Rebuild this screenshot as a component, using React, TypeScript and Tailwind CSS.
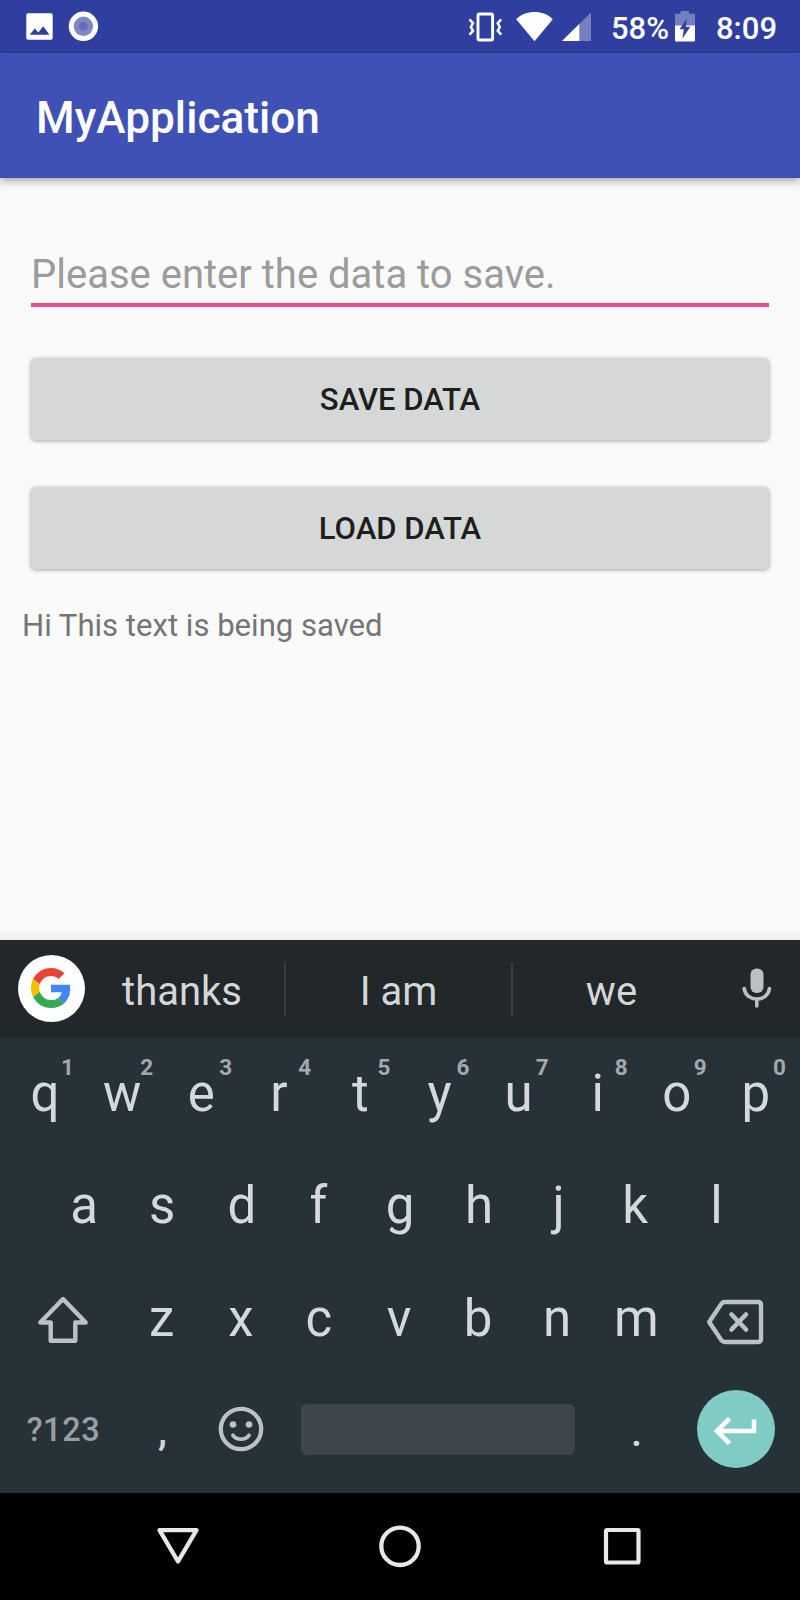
import React from "react";

const GREY = "#bcc1c4";

function StatusBar() {
  return (
    <div className="flex h-[53px] items-start bg-[#303f9f] text-white">
      <svg className="mt-[13px] ml-[26px] h-[27px] w-[27px]" viewBox="0 0 27 27">
        <path
          fillRule="evenodd"
          fill="#fff"
          d="M2.500 .3h22a2 2 0 0 1 2.200 2.200v22a2 2 0 0 1-2.200 2.200h-22a2 2 0 0 1-2.200-2.200v-22a2 2 0 0 1 2.200-2.200zM3.700 21.700h19.800L17.200 13.300l-4.900 6.300-3.500-4.200z"
        />
      </svg>
      <svg className="mt-[11px] ml-[15px] h-[31px] w-[31px]" viewBox="0 0 31 31">
        <circle cx="15.4" cy="15.3" r="14.7" fill="#fff" />
        <circle cx="15.4" cy="15.3" r="9.7" fill="#8087c4" />
        <circle cx="15.4" cy="15.3" r="4.5" fill="#636cb6" />
      </svg>
      <div className="flex-1" />
      <svg className="mt-[12px] h-[30px] w-[36px]" viewBox="0 0 36 30" fill="none" stroke="#fff">
        <rect x="10" y="2" width="14.600" height="26" rx="1.500" strokeWidth="2.900" />
        <path d="M1.500 7.300L5 11.200 2.900 15 5 18.800 1.500 22.700M33.200 7.300L29.700 11.200 31.800 15 29.700 18.800 33.200 22.700" strokeWidth="2.500" />
      </svg>
      <svg className="mt-[11px] ml-[12px] h-[31px] w-[37px]" viewBox="0 0 37 31">
        <path d="M18.500 30.300L.2 8.300C5 3.300 11.500 1 18.500 1s13.500 2.300 18.300 7.300z" fill="#fff" />
      </svg>
      <svg className="mt-[11px] ml-[9px] h-[30px] w-[30px]" viewBox="0 0 30 30">
        <path d="M29 1.500V30H0z" fill="#767fc0" />
        <path d="M17.300 13V30H0z" fill="#fff" />
      </svg>
      <span className="mt-[9px] ml-[19px] w-[64px] text-[31px] leading-[40px] font-medium">58%</span>
      <svg className="mt-[11px] h-[31px] w-[20px]" viewBox="0 0 20 31">
        <path d="M1 2.700H5.500V0h8.500V2.700h5A1 1 0 0 1 20 3.700V15H0V3.700A1 1 0 0 1 1 2.700z" fill="#767fc0" />
        <path d="M0 14.500h20V29.500a1 1 0 0 1-1 1h-18A1 1 0 0 1 0 29.500z" fill="#fff" />
        <path d="M12 7.500L4.500 18.300h4.300L7.500 27.500 15.300 15.700h-4.500z" fill="#303f9f" />
      </svg>
      <span className="mt-[9px] mr-[22px] ml-[21px] w-[62px] text-[31px] leading-[40px] font-medium">8:09</span>
    </div>
  );
}

function Button({ label }: { label: string }) {
  return (
    <button className="flex h-[82px] w-full items-center justify-center rounded-[5px] bg-[#d6d8d7] pt-[2px] text-[31.100px] font-medium text-[#1d1f1e] shadow-[0_1px_4px_rgba(0,0,0,0.36)]">
      {label}
    </button>
  );
}

function Key({ label, hint, nudge = "" }: { label: string; hint?: string; nudge?: string }) {
  return (
    <div className={`relative flex w-[79.100px] items-center justify-center text-[51px] leading-[50px] ${nudge}`}>
      {label}
      {hint && (
        <span className="absolute top-[17px] left-[56px] w-[14px] text-center text-[22.500px] leading-[24px] font-bold text-[#a3a9ac]">
          {hint}
        </span>
      )}
    </div>
  );
}

function GoogleLogo() {
  return (
    <div className="ml-[18px] flex h-[67px] w-[67px] items-center justify-center rounded-full bg-white pr-px">
      <svg className="h-[40px] w-[40px]" viewBox="0 0 48 48">
        <path fill="#ea4335" d="M24 9.500c3.540 0 6.710 1.220 9.210 3.600l6.850-6.850C35.900 2.380 30.470 0 24 0 14.620 0 6.510 5.380 2.560 13.220l7.980 6.190C12.430 13.720 17.740 9.500 24 9.500z" />
        <path fill="#4285f4" d="M46.980 24.550c0-1.570-.15-3.090-.38-4.550H24v9.020h12.940c-.58 2.960-2.260 5.480-4.780 7.180l7.730 6c4.510-4.180 7.090-10.360 7.090-17.650z" />
        <path fill="#fbbc05" d="M10.530 28.590c-.48-1.450-.76-2.990-.76-4.590s.27-3.140.76-4.590l-7.980-6.190C.92 16.460 0 20.120 0 24c0 3.880.92 7.540 2.560 10.780l7.970-6.190z" />
        <path fill="#34a853" d="M24 48c6.480 0 11.930-2.130 15.890-5.810l-7.730-6c-2.150 1.450-4.920 2.300-8.160 2.300-6.260 0-11.570-4.220-13.470-9.910l-7.980 6.190C6.510 42.620 14.620 48 24 48z" />
      </svg>
    </div>
  );
}

function Suggestions() {
  return (
    <div className="flex h-[98px] items-center bg-[#22272a] pb-[2px] text-[40px] text-[#d3d7da]">
      <GoogleLogo />
      <div className="w-[194px] pt-[7px] text-center">thanks</div>
      <div className="mt-px ml-[5px] h-[54px] w-[2px] bg-[#373c3f]" />
      <div className="w-[225px] pt-[7px] text-center">I am</div>
      <div className="mt-px h-[54px] w-[2px] bg-[#373c3f]" />
      <div className="w-[197px] pt-[7px] text-center">we</div>
      <svg className="ml-[32px] h-[40px] w-[30px]" viewBox="0 0 30 40">
        <rect x="8.500" y="0.500" width="13" height="24.500" rx="6" fill="#bdbfc1" />
        <path d="M2.200 20.500c.8 7 6.600 10.500 12.600 10.500s11.800-3.500 12.600-10.500M14.800 31v7" fill="none" stroke="#bdbfc1" strokeWidth="3.600" strokeLinecap="round" />
      </svg>
    </div>
  );
}

function Keyboard() {
  return (
    <div className="h-[455px] bg-[#273238] text-[#d5d9dc]">
      <div className="flex h-[112px] justify-center">
        {"qwertyuiop".split("").map((k, i) => (
          <Key
            key={k}
            label={k}
            hint={String((i + 1) % 10)}
            nudge={k === "r" ? "pr-[5px]" : k === "q" ? "pl-[2px]" : k === "w" || k === "e" ? "pr-[2px]" : ""}
          />
        ))}
      </div>
      <div className="flex h-[112px] justify-center">
        {"asdfghjkl".split("").map((k) => (
          <Key key={k} label={k} nudge={k === "f" ? "pr-[5px]" : k === "k" ? "pr-[4px]" : k === "s" ? "pr-px" : k === "a" || k === "j" ? "pl-px" : ""} />
        ))}
      </div>
      <div className="flex h-[112px] justify-center">
        <div className="flex w-[119px] items-center justify-center pt-[3px] pr-px">
          <svg className="h-[50px] w-[52px]" viewBox="0 0 52 50" fill="none" stroke={GREY} strokeWidth="4.400">
            <path d="M26 4L3.300 27.500H13.700V45.800H38.300V27.500H48.700z" strokeLinejoin="round" />
          </svg>
        </div>
        {"zxcvbnm".split("").map((k) => (
          <Key key={k} label={k} nudge={k === "c" ? "pt-[2px] pr-[4px]" : "pt-[2px] pr-[2px]"} />
        ))}
        <div className="flex w-[119px] items-center justify-center pt-[7px] pr-[2px]">
          <svg className="h-[46px] w-[58px]" viewBox="0 0 58 46" fill="none" stroke={GREY} strokeWidth="4.400" strokeLinejoin="round" strokeLinecap="round">
            <path d="M3.200 23L15.500 4.600Q16.800 3 19 3H52Q55 3 55 6V40Q55 43 52 43H19Q16.800 43 15.500 41.400z" />
            <path d="M25.500 15.500l14.500 15M40 15.500l-14.500 15" strokeWidth="4.600" />
          </svg>
        </div>
      </div>
      <div className="flex h-[110px] items-center px-[4px]">
        <div className="w-[119px] pt-[2px] text-center text-[32.500px] font-medium tracking-[0.600px] text-[#98a0a4]">?123</div>
        <div className="w-[79px] pt-[5px] text-center text-[40px] font-medium">,</div>
        <div className="flex w-[79px] justify-center pr-[2px]">
          <svg className="h-[46px] w-[46px]" viewBox="0 0 46 46">
            <circle cx="23" cy="23" r="20.200" fill="none" stroke={GREY} strokeWidth="4.300" />
            <circle cx="15" cy="18.500" r="3.300" fill={GREY} />
            <circle cx="31" cy="18.500" r="3.300" fill={GREY} />
            <path d="M15 29.300c4 5.200 12 5.200 16 0" fill="none" stroke={GREY} strokeWidth="3.800" strokeLinecap="round" />
          </svg>
        </div>
        <div className="ml-[20px] h-[51px] w-[274px] rounded-[6px] bg-[#3c464b]" />
        <div className="ml-[22px] w-[79px] pt-[7px] text-center text-[40px] font-medium">.</div>
        <div className="flex flex-1 justify-center pr-px">
          <div className="flex h-[78px] w-[78px] items-center justify-center rounded-full bg-[#80cbc4]">
            <svg className="mt-[4px] mr-[2px] h-[28px] w-[44px]" viewBox="0 0 44 28" fill="none" stroke="#fff" strokeWidth="4.600">
              <path d="M41 2.500V14H4M16.500 1.500L4 14l12.500 12.500" />
            </svg>
          </div>
        </div>
      </div>
    </div>
  );
}

function NavBar() {
  return (
    <div className="flex h-[107px] items-center justify-center gap-[178px] bg-black pb-px">
      <svg className="h-[44px] w-[44px]" viewBox="0 0 44 44">
        <path d="M3.500 6.200h37L22 37.500z" fill="none" stroke="#e8e8e8" strokeWidth="4.300" strokeLinejoin="round" />
      </svg>
      <svg className="h-[44px] w-[44px]" viewBox="0 0 44 44">
        <circle cx="22" cy="22.300" r="18.700" fill="none" stroke="#e8e8e8" strokeWidth="4.300" />
      </svg>
      <svg className="h-[44px] w-[44px]" viewBox="0 0 44 44">
        <rect x="6" y="6" width="32.500" height="32.500" rx="1" fill="none" stroke="#e8e8e8" strokeWidth="4.200" />
      </svg>
    </div>
  );
}

export default function App() {
  return (
    <div className="flex h-[1600px] w-[800px] flex-col overflow-hidden bg-[#fafafa] font-['Roboto','Liberation_Sans',sans-serif]">
      <StatusBar />
      <header className="flex h-[125px] items-center bg-[#3f51b5] pt-[6px] pl-[36px] text-[44.200px] font-medium text-white shadow-[0_3px_8px_rgba(0,0,0,0.34)]">
        MyApplication
      </header>
      <main className="flex flex-1 flex-col px-[31px] pt-[69px]">
        <div className="h-[60px] border-b-[4px] border-[#f04b86] text-[40px] leading-[55px] text-[#9b9b9b]">
          Please enter the data to save.
        </div>
        <div className="mt-[51px] flex flex-col gap-[47px]">
          <Button label="SAVE DATA" />
          <Button label="LOAD DATA" />
        </div>
        <p className="mt-[37px] ml-[-9px] text-[31.100px] leading-[40px] text-[#757575]">Hi This text is being saved</p>
      </main>
      <div className="h-[12px] bg-linear-to-b from-[#fafafa] to-[#eeefef]" />
      <Suggestions />
      <Keyboard />
      <NavBar />
    </div>
  );
}
